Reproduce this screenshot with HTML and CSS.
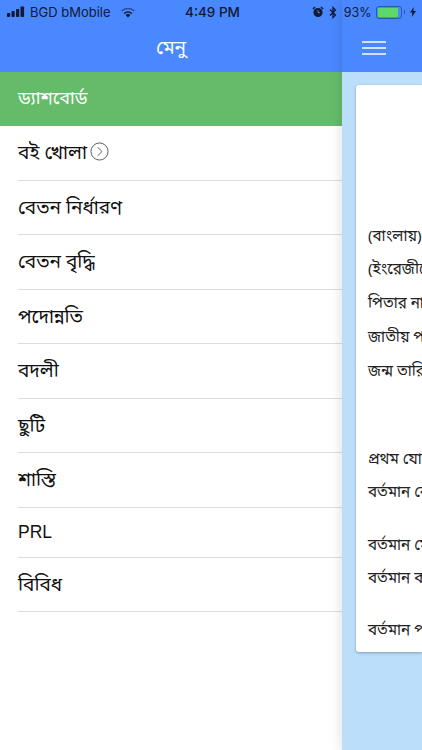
FILE: index.html
```html
<!DOCTYPE html>
<html lang="bn">
<head>
<meta charset="utf-8">
<title>মেনু</title>
<link rel="stylesheet" href="styles.css">
</head>
<body>
<div class="phone">
  <div class="status">
    <div class="status-left">
      <svg class="signal" width="18" height="12" viewBox="0 0 18 12"><rect x="0" y="7" width="3.2" height="4" rx=".8"/><rect x="4.5" y="5" width="3.2" height="6" rx=".8"/><rect x="9" y="3" width="3.2" height="8" rx=".8"/><rect x="13.5" y="0.5" width="3.6" height="10.5" rx=".8"/></svg>
      <span>BGD bMobile</span>
      <svg class="wifi" width="16" height="12" viewBox="0 0 16 12"><path d="M8 11.5 5.6 8.9a3.5 3.5 0 0 1 4.8 0Z" fill="#111a33"/><path d="M3.6 6.9a6.4 6.4 0 0 1 8.8 0l-1 1.1a5 5 0 0 0-6.8 0Z" fill="#111a33"/><path d="M1.2 4.4a10 10 0 0 1 13.6 0l-1 1.1a8.5 8.5 0 0 0-11.6 0Z" fill="#111a33" opacity=".55"/></svg>
    </div>
    <div class="status-time">4:49 PM</div>
    <div class="status-right">
      <svg width="12" height="12" viewBox="0 0 12 12"><circle cx="6" cy="6.5" r="4.6" fill="#111a33"/><path d="M1 3 3 1M11 3 9 1" stroke="#111a33" stroke-width="1.5"/><path d="M6 4v2.8h2" stroke="#4a88ff" fill="none" stroke-width="1"/></svg>
      <svg class="bt" width="8" height="13" viewBox="0 0 8 13"><path d="M1 3.5 6.5 9 4 11.5v-10L6.5 4 1 9.5" stroke="#111a33" stroke-width="1.3" fill="none"/></svg>
      <span class="pct">93%</span>
      <span class="battery"><span class="battery-fill"></span></span>
      <span class="battery-tip"></span>
      <svg width="6" height="10" viewBox="0 0 6 10"><path d="M3.8 0 0 5.6h2.4L1.8 10 6 4H3.4Z" fill="#111a33"/></svg>
    </div>
  </div>

  <nav class="menu">
    <header class="menu-head"><span>মেনু</span></header>
    <div class="item active">ড্যাশবোর্ড</div>
    <div class="item">বই খোলা
      <svg class="chev" width="19" height="19" viewBox="0 0 20 20"><circle cx="10" cy="10" r="9" fill="none" stroke="#555" stroke-width="1"/><path d="M8 5.4 12.6 10 8 14.6" fill="none" stroke="#555" stroke-width="1"/></svg>
    </div>
    <div class="item">বেতন নির্ধারণ</div>
    <div class="item">বেতন বৃদ্ধি</div>
    <div class="item">পদোন্নতি</div>
    <div class="item">বদলী</div>
    <div class="item">ছুটি</div>
    <div class="item">শাস্তি</div>
    <div class="item short">PRL</div>
    <div class="item">বিবিধ</div>
  </nav>

  <main class="content">
    <header class="content-head">
      <svg width="24" height="14" viewBox="0 0 24 14"><path d="M0 1h24M0 7h24M0 13h24" stroke="#fff" stroke-width="1.7"/></svg>
    </header>
    <section class="card">
      <div class="line l1">(বাংলায়) নাম</div>
      <div class="line l2">(ইংরেজীতে) নাম</div>
      <div class="line l3">পিতার নাম</div>
      <div class="line l3">জাতীয় পরিচয়পত্র</div>
      <div class="line l3">জন্ম তারিখ</div>
      <div class="line l4">প্রথম যোগদান</div>
      <div class="line l2">বর্তমান বেতন</div>
      <div class="line l5">বর্তমান মেয়াদ</div>
      <div class="line l2">বর্তমান কর্মস্থল</div>
      <div class="line l6">বর্তমান পদ</div>
    </section>
  </main>
</div>
</body>
</html>
```
FILE: styles.css
```css
* { box-sizing: border-box; }
html, body { margin: 0; padding: 0; }
body { font-family: "Noto Sans", "Noto Sans Bengali", "Liberation Sans", sans-serif; background: #fff; color: #111; }
.phone { position: relative; display: flex; width: 422px; height: 750px; overflow: hidden; }

.status { position: absolute; top: 0; left: 0; right: 0; height: 24px; display: flex; align-items: center; justify-content: space-between; padding: 0 6px 0 7px; font: 13px Inter, "Liberation Sans", sans-serif; color: #111a33; z-index: 2; }
.status-left { display: flex; align-items: center; gap: 5px; width: 140px; }
.signal { fill: #111a33; flex: none; }
.wifi { margin-left: 4px; flex: none; }
.status-time { font-weight: 500; font-size: 13.5px; margin-left: 2px; }
.status-right { display: flex; align-items: center; justify-content: flex-end; width: 140px; gap: 2px; }
.bt { margin: 0 5px 0 3px; }
.pct { font-size: 12.5px; margin-right: 2px; }
.battery { display: block; width: 26px; height: 13px; border: 1px solid #2d5aa8; border-radius: 3px; padding: 1px; }
.battery-fill { display: block; width: 92%; height: 100%; background: #5fd86a; border-radius: 1px; }
.battery-tip { display: block; width: 1.5px; height: 4px; background: #2d5aa8; margin-right: 3px; }

.menu { width: 342px; flex: none; display: flex; flex-direction: column; background: #fff; }
.menu-head { height: 72px; padding-top: 24px; background: #4a88ff; color: #fff; display: flex; align-items: center; justify-content: center; font-size: 19px; }
.item { height: 54.5px; margin-left: 18px; padding-top: 1px; border-bottom: 1px solid #ddd; display: flex; align-items: center; gap: 3px; font-size: 19px; color: #111; }
.item.active { height: 54px; margin-left: 0; padding: 0 0 2px 18px; background: #66bb6a; color: #fff; border-bottom: 0; font-size: 18px; }
.item.short { height: 50px; font-family: "Liberation Sans", sans-serif; font-size: 17.5px; }
.chev { flex: none; margin-top: -3px; }

.content { flex: 1; min-width: 0; background: #bbdefb; box-shadow: -4px 0 8px rgba(0, 0, 0, .08); position: relative; z-index: 1; }
.content-head { height: 72px; padding: 23px 0 0 20px; background: #4a88ff; display: flex; align-items: center; }
.card { margin: 13px 0 0 14px; height: 567px; padding: 140px 0 0 12px; background: #fff; border-radius: 3px 0 0 3px; box-shadow: 0 1px 3px rgba(0, 0, 0, .3); font-size: 15.2px; color: #222; white-space: nowrap; overflow: hidden; }
.line { height: 20px; line-height: 20px; }
.l2 { margin-top: 13px; }
.l3 { margin-top: 14px; }
.l4 { margin-top: 68px; }
.l5 { margin-top: 33px; }
.l6 { margin-top: 32px; }
```
